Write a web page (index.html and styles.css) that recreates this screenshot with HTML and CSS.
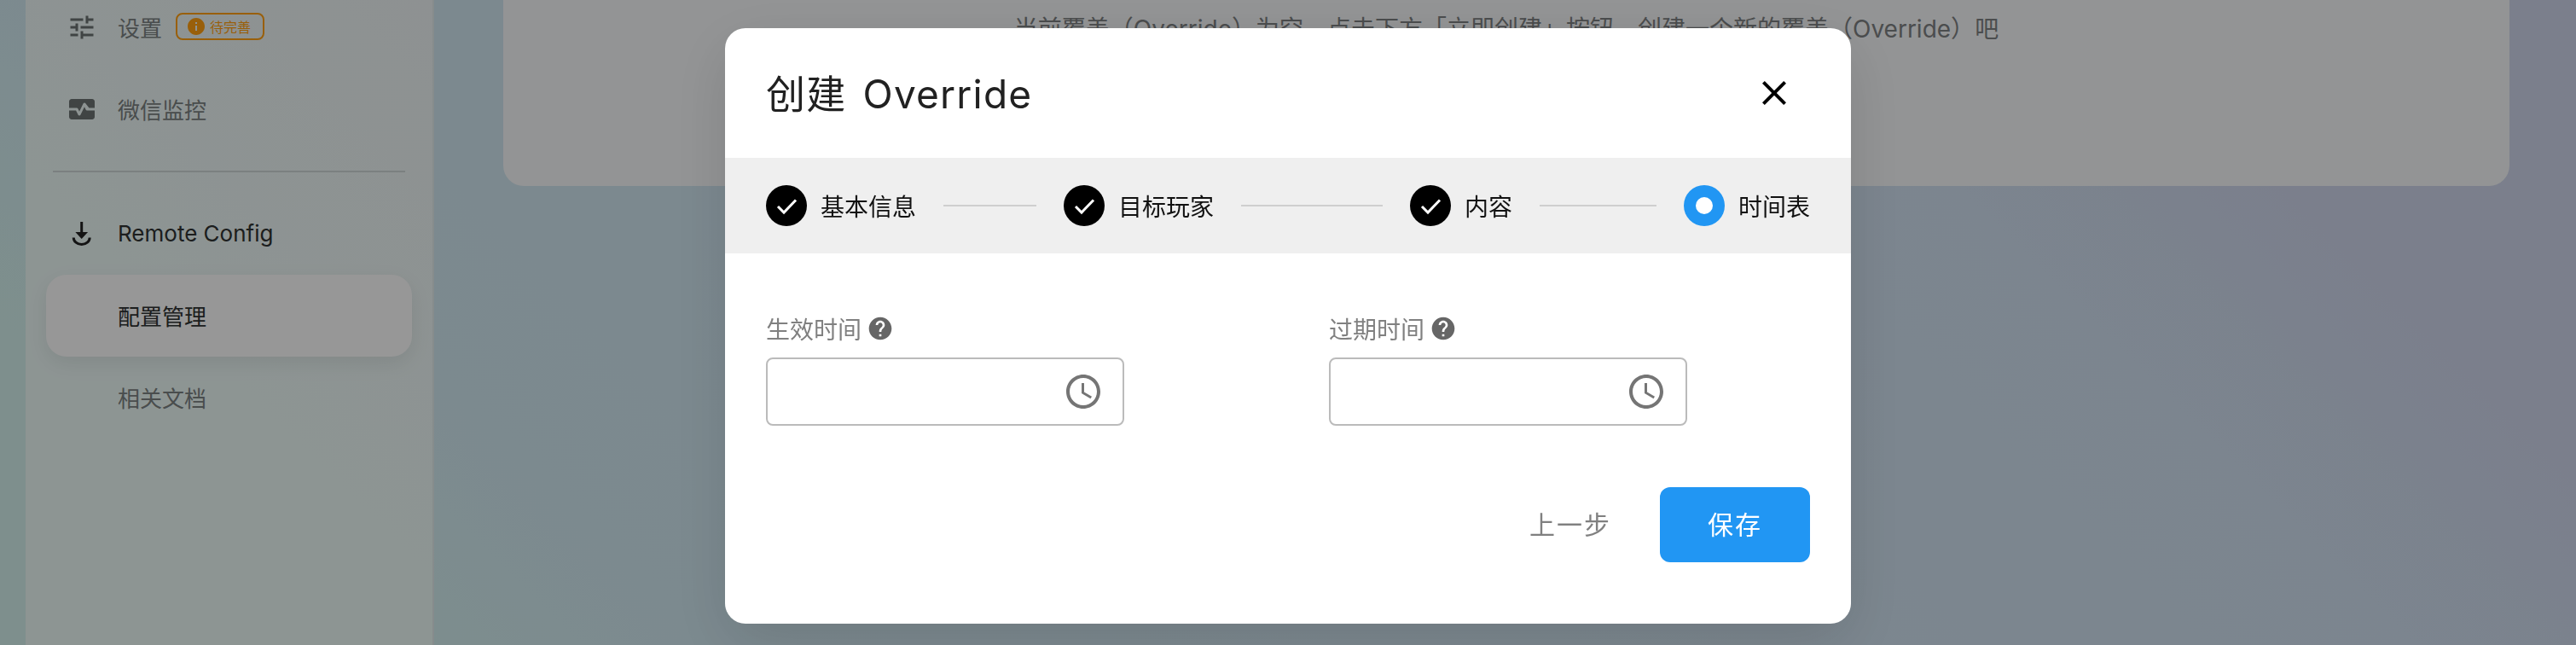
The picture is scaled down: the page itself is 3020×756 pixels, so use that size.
FILE: index.html
```html
<!DOCTYPE html>
<html lang="en">
<head>
    <meta charset="UTF-8">
    <title>创建 Override</title>
    <meta name="viewport" content="width=device-width, initial-scale=1.0">
    <link rel="stylesheet" href="styles.css">
</head>
<body>

<div class="app">
    <!-- Sidebar -->
    <aside class="sidebar">
        <nav class="nav">
            <a class="nav-item" href="#">
                <svg class="nav-icon" viewBox="0 0 24 24"><path d="M3 17v2h6v-2H3zM3 5v2h10V5H3zm10 16v-2h8v-2h-8v-2h-2v6h2zM7 9v2H3v2h4v2h2V9H7zm14 4v-2H11v2h10zm-6-4h2V7h4V5h-4V3h-2v6z"/></svg>
                <span>设置</span>
                <span class="badge">
                    <svg class="badge-icon" viewBox="0 0 24 24"><path d="M12 2C6.48 2 2 6.48 2 12s4.48 10 10 10 10-4.48 10-10S17.52 2 12 2zm1 15h-2v-6h2v6zm0-8h-2V7h2v2z"/></svg>
                    待完善
                </span>
            </a>
            <a class="nav-item" href="#">
                <svg class="nav-icon" viewBox="0 0 24 24"><path d="M15.11 12.45 14 10.24l-3.11 6.21c-.16.34-.51.55-.89.55s-.73-.21-.89-.55L7.38 13H2v5c0 1.1.9 2 2 2h16c1.1 0 2-.9 2-2v-5h-6c-.38 0-.73-.21-.89-.55zM20 4H4c-1.1 0-2 .9-2 2v5h6c.38 0 .73.21.89.55L10 13.76l3.11-6.21c.34-.68 1.45-.68 1.79 0L17.62 11H22V6c0-1.1-.9-2-2-2z"/></svg>
                <span>微信监控</span>
            </a>
            <hr class="nav-divider">
            <a class="nav-item nav-item-dark" href="#">
                <svg class="nav-icon" viewBox="0 0 24 24"><path d="M10.800 2.700h2v8h3.900L11.800 16l-4.900-5.300h3.900z"/><path class="arc" d="M5.500 15a6.300 5.400 0 0 0 12.600 0"/></svg>
                <span>Remote Config</span>
            </a>
            <a class="nav-item nav-item-dark nav-item-active" href="#">
                <span>配置管理</span>
            </a>
            <a class="nav-item" href="#">
                <span>相关文档</span>
            </a>
        </nav>
    </aside>

    <!-- Main Content -->
    <main class="main">
        <div class="empty-card">当前覆盖（Override）为空，点击下方「立即创建」按钮，创建一个新的覆盖（Override）吧</div>
    </main>
</div>

<!-- Create dialog -->
<div class="backdrop">
    <div class="modal">
        <div class="modal-header">
            <h2>创建 Override</h2>
            <svg class="close-icon" viewBox="0 0 24 24"><path d="M19 6.410 17.590 5 12 10.590 6.410 5 5 6.410 10.590 12 5 17.590 6.410 19 12 13.410 17.590 19 19 17.590 13.410 12z"/></svg>
        </div>

        <div class="stepper">
            <div class="step">
                <span class="step-dot"><svg viewBox="0 0 48 48"><path d="M14 25l7 7L35 17.500"/></svg></span>
                基本信息
            </div>
            <div class="step-line step-line-a"></div>
            <div class="step">
                <span class="step-dot"><svg viewBox="0 0 48 48"><path d="M14 25l7 7L35 17.500"/></svg></span>
                目标玩家
            </div>
            <div class="step-line step-line-b"></div>
            <div class="step">
                <span class="step-dot"><svg viewBox="0 0 48 48"><path d="M14 25l7 7L35 17.500"/></svg></span>
                内容
            </div>
            <div class="step-line step-line-c"></div>
            <div class="step">
                <span class="step-dot step-dot-current"></span>
                时间表
            </div>
        </div>

        <div class="fields">
            <div class="field">
                <label class="field-label">
                    生效时间
                    <svg class="help-icon" viewBox="0 0 24 24"><path d="M12 2C6.480 2 2 6.480 2 12s4.480 10 10 10 10-4.480 10-10S17.520 2 12 2zm1 17h-2v-2h2v2zm2.070-7.750l-.9.920C13.450 12.900 13 13.500 13 15h-2v-.5c0-1.100.450-2.100 1.170-2.830l1.240-1.260c.370-.360.590-.860.590-1.410 0-1.100-.9-2-2-2s-2 .9-2 2H8c0-2.210 1.790-4 4-4s4 1.790 4 4c0 .880-.360 1.680-.930 2.250z"/></svg>
                </label>
                <div class="time-input">
                    <svg class="clock-icon" viewBox="0 0 24 24"><path d="M11.990 2C6.470 2 2 6.480 2 12s4.470 10 9.990 10C17.520 22 22 17.520 22 12S17.520 2 11.990 2zM12 20c-4.420 0-8-3.580-8-8s3.580-8 8-8 8 3.580 8 8-3.580 8-8 8z"/><path d="M12.500 7H11v6l5.250 3.150.750-1.230-4.500-2.670z"/></svg>
                </div>
            </div>
            <div class="field">
                <label class="field-label">
                    过期时间
                    <svg class="help-icon" viewBox="0 0 24 24"><path d="M12 2C6.480 2 2 6.480 2 12s4.480 10 10 10 10-4.480 10-10S17.520 2 12 2zm1 17h-2v-2h2v2zm2.070-7.750l-.9.920C13.450 12.900 13 13.500 13 15h-2v-.5c0-1.100.450-2.100 1.170-2.830l1.240-1.260c.370-.360.590-.860.590-1.410 0-1.100-.9-2-2-2s-2 .9-2 2H8c0-2.210 1.790-4 4-4s4 1.790 4 4c0 .880-.360 1.680-.930 2.250z"/></svg>
                </label>
                <div class="time-input">
                    <svg class="clock-icon" viewBox="0 0 24 24"><path d="M11.990 2C6.470 2 2 6.480 2 12s4.470 10 9.990 10C17.520 22 22 17.520 22 12S17.520 2 11.990 2zM12 20c-4.420 0-8-3.580-8-8s3.580-8 8-8 8 3.580 8 8-3.580 8-8 8z"/><path d="M12.500 7H11v6l5.250 3.150.750-1.230-4.500-2.670z"/></svg>
                </div>
            </div>
        </div>

        <div class="modal-actions">
            <button class="btn-text">上一步</button>
            <button class="btn-primary">保存</button>
        </div>
    </div>
</div>

</body>
</html>
```

FILE: styles.css
```css
* {
    box-sizing: border-box;
}

html, body {
    height: 100%;
}

body {
    margin: 0;
    overflow: hidden;
    font-family: Inter, 'Noto Sans CJK SC', sans-serif;
    color: #2f3232;
}

a {
    color: inherit;
    text-decoration: none;
}

.app {
    display: flex;
    height: 100%;
    padding-left: 30px;
    background: linear-gradient(45deg, #d2efec 10%, #cfe6ef 22%, #cfdeee 75%, #cdd4ea 85%);
}

/* Sidebar */
.sidebar {
    width: 479px;
    flex-shrink: 0;
    padding: 0 24px;
    background: linear-gradient(45deg, #ecf8f6 45%, #edf2f3 100%);
    border-right: 2px solid #dfeaea;
    overflow: hidden;
}

.nav {
    margin-top: -16px;
}

.nav-item {
    display: flex;
    align-items: center;
    height: 96px;
    padding-left: 84px;
    padding-bottom: 2px;
    position: relative;
    font-size: 26px;
    color: #7a8181;
    border-radius: 24px;
}

.nav-icon {
    position: absolute;
    left: 24px;
    top: 30px;
    width: 36px;
    height: 36px;
    fill: #6b7272;
}

.nav-item-dark {
    color: #2f3232;
}

.nav-item-dark .nav-icon {
    fill: #222;
}

.nav-item-dark .nav-icon .arc {
    fill: none;
    stroke: #222;
    stroke-width: 2;
}

.nav-item-active {
    background-color: #fcfcfc;
    box-shadow: 0 8px 24px rgba(0, 0, 0, 0.08);
}

.nav-divider {
    margin: 24px 8px;
    border: none;
    height: 2px;
    background-color: #cdd6d6;
}

.badge {
    display: flex;
    align-items: center;
    gap: 6px;
    width: 104px;
    height: 32px;
    margin-left: 16px;
    padding-left: 12px;
    font-size: 16px;
    color: #ff9f11;
    border: 2px solid #ff9f11;
    border-radius: 8px;
}

.badge-icon {
    width: 24px;
    height: 24px;
    margin-left: -2px;
    margin-right: -2px;
    fill: currentColor;
}

/* Main */
.main {
    flex: 1;
    padding: 0 78px 0 81px;
}

.empty-card {
    height: 218px;
    padding-top: 14px;
    text-align: center;
    font-size: 28px;
    line-height: 40px;
    color: #7d8082;
    background-color: #f5f7f8;
    border-radius: 0 0 24px 24px;
}

/* Dialog */
.backdrop {
    position: fixed;
    inset: 0;
    display: flex;
    justify-content: center;
    align-items: flex-start;
    padding-top: 33px;
    background-color: rgba(0, 0, 0, 0.4);
}

.modal {
    width: 1320px;
    height: 698px;
    background-color: #fff;
    border-radius: 24px;
    overflow: hidden;
    box-shadow: 0 22px 70px rgba(0, 0, 0, 0.12);
}

.modal-header {
    display: flex;
    align-items: center;
    justify-content: space-between;
    height: 152px;
    padding: 0 48px;
}

.modal-header h2 {
    margin: 0 0 5px;
    font-size: 46px;
    font-weight: 400;
    letter-spacing: 1.2px;
    word-spacing: 5px;
    color: #212121;
}

.close-icon {
    width: 48px;
    height: 48px;
    margin-right: 18px;
    fill: #000;
}

.stepper {
    display: flex;
    align-items: center;
    height: 112px;
    padding: 0 48px;
    background-color: #efefef;
}

.step {
    display: flex;
    align-items: center;
    gap: 16px;
    font-size: 28px;
    color: #111;
    white-space: nowrap;
}

.step-dot {
    display: flex;
    align-items: center;
    justify-content: center;
    width: 48px;
    height: 48px;
    border-radius: 50%;
    background-color: #000;
}

.step-dot svg {
    width: 48px;
    height: 48px;
    fill: none;
    stroke: #fff;
    stroke-width: 3;
}

.step-dot-current {
    background-color: #2196f3;
}

.step-dot-current::after {
    content: "";
    width: 20px;
    height: 20px;
    border-radius: 50%;
    background-color: #fff;
}

.step-line {
    height: 2px;
    margin: 0 32px;
    background-color: #cfcfcf;
}

.step-line-a {
    width: 109px;
}

.step-line-b {
    width: 166px;
}

.step-line-c {
    width: 137px;
}

.fields {
    display: flex;
    gap: 240px;
    padding: 0 48px;
    margin-top: 72px;
}

.field {
    width: 420px;
}

.field-label {
    display: flex;
    align-items: center;
    gap: 6px;
    height: 32px;
    margin-bottom: 18px;
    font-size: 28px;
    color: #808080;
}

.help-icon {
    width: 32px;
    height: 32px;
    fill: #666;
}

.time-input {
    display: flex;
    align-items: center;
    justify-content: flex-end;
    height: 80px;
    padding-right: 22px;
    border: 2px solid #bbb;
    border-radius: 8px;
}

.clock-icon {
    width: 48px;
    height: 48px;
    fill: #757575;
}

.modal-actions {
    display: flex;
    align-items: center;
    justify-content: flex-end;
    gap: 57px;
    padding: 0 48px;
    margin-top: 72px;
}

.modal-actions button {
    border: none;
    font-family: inherit;
    font-size: 30px;
    background: none;
    padding: 0 0 5px;
    cursor: pointer;
}

.modal-actions .btn-text {
    color: #808080;
    letter-spacing: 2px;
}

.modal-actions .btn-primary {
    width: 176px;
    height: 88px;
    color: #fff;
    background-color: #2196f3;
    border-radius: 12px;
    letter-spacing: 2px;
}
```
